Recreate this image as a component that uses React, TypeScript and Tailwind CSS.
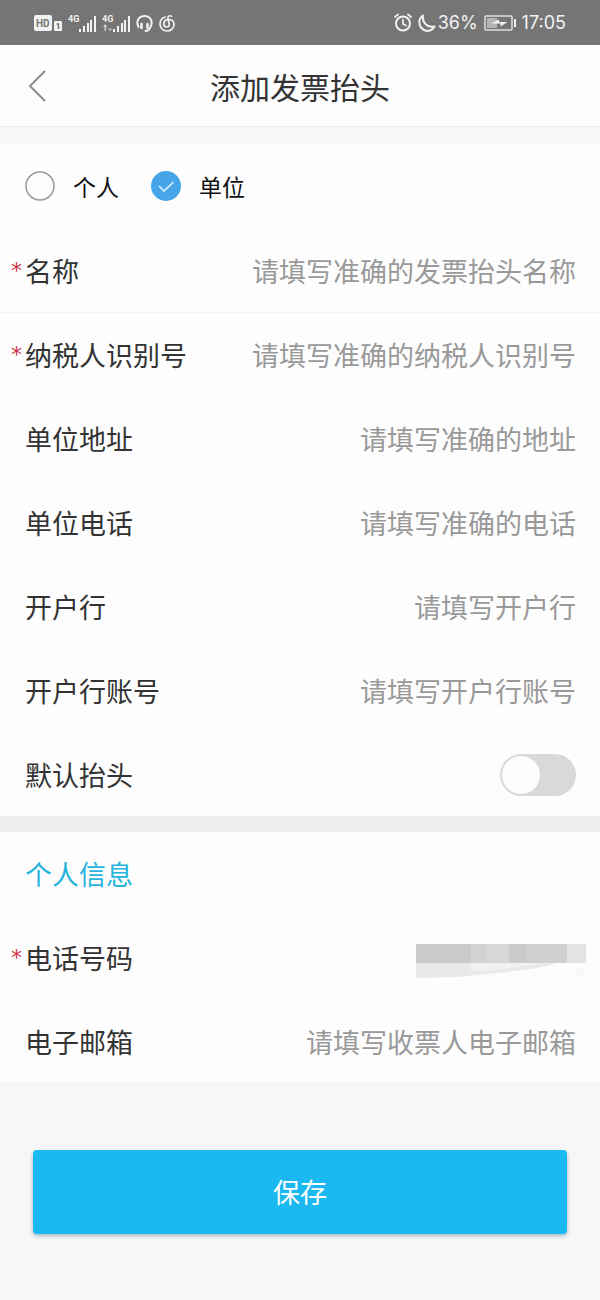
import React, { useState } from 'react';

interface Field {
    id: string;
    label: string;
    placeholder: string;
    required?: boolean;
    line?: string;
}

const companyFields: Field[] = [
    { id: 'name', label: '名称', placeholder: '请填写准确的发票抬头名称', required: true, line: 'border-[#f5f5f5]' },
    { id: 'taxNo', label: '纳税人识别号', placeholder: '请填写准确的纳税人识别号', required: true },
    { id: 'address', label: '单位地址', placeholder: '请填写准确的地址' },
    { id: 'tel', label: '单位电话', placeholder: '请填写准确的电话' },
    { id: 'bank', label: '开户行', placeholder: '请填写开户行' },
    { id: 'bankNo', label: '开户行账号', placeholder: '请填写开户行账号' },
];

function SignalIcon({ data }: { data?: boolean }) {
    return (
        <svg className="w-7 h-5" viewBox="0 0 28 20" fill="#f2f2f2" aria-hidden="true">
            <text x="0" y="9" fontSize="9" fontWeight="700" fontFamily="Roboto, sans-serif">4G</text>
            {data && <path d="M3 11l2.500 3H4v4H2.500v-4H1zM8 18l-2-2.500h4z" opacity="0.7" />}
            <rect x="11" y="16" width="2" height="3" />
            <rect x="15" y="13" width="2" height="6" />
            <rect x="19" y="10" width="2" height="9" />
            <rect x="22" y="7" width="2" height="12" />
            <rect x="26" y="3" width="2" height="16" />
        </svg>
    );
}

function StatusBar() {
    return (
        <div className="h-[45px] bg-[#757575] text-[#f2f2f2] flex items-center justify-between px-[34px]">
            <div className="flex items-center gap-1.5">
                <svg className="w-7 h-5" viewBox="0 0 28 20" fill="#f2f2f2" aria-hidden="true">
                    <rect x="0" y="2" width="18" height="16" rx="2" />
                    <text x="2" y="14" fontSize="10" fontWeight="700" fill="#757575" fontFamily="Roboto, sans-serif">HD</text>
                    <rect x="20" y="8" width="8" height="10" rx="1" />
                    <path d="M22.500 11h2v5" fill="none" stroke="#757575" strokeWidth="1.500" />
                </svg>
                <SignalIcon />
                <SignalIcon data />
                <svg className="w-[17px] h-5" viewBox="0 0 17 20" fill="none" stroke="#f2f2f2" strokeWidth="2" strokeLinecap="round" aria-hidden="true">
                    <path d="M2.500 14C-.5 8 3 3 8.500 3s9 5 6 11c-.8 2.500-2.500 4-5 4" />
                    <path d="M5.500 11v4M11.500 11v4" strokeWidth="2.500" />
                </svg>
                <svg className="w-4 h-5" viewBox="0 0 16 20" fill="none" stroke="#f2f2f2" strokeWidth="1.700" strokeLinecap="round" aria-hidden="true">
                    <path d="M6 4C3 5 1 7.500 1 11c0 4 3 7 7 7s7-3 7-6.500C15 8 12.500 6.500 9.500 6.500S4.800 8.500 4.800 11c0 1.800 1.300 3 2.900 3s2.900-1.300 2.500-3L9 5.500C8.600 3.500 10 2 12.500 3.200" />
                </svg>
            </div>
            <div className="flex items-center font-['Inter',sans-serif] text-[18px] leading-5">
                <svg className="w-[18px] h-5" viewBox="0 0 18 20" fill="none" stroke="#f2f2f2" strokeWidth="2" strokeLinecap="round" aria-hidden="true">
                    <circle cx="9" cy="10.500" r="7" />
                    <path d="M9 6.500v4.500l3 1.500M1 4l3-2.500M17 4l-3-2.500" strokeWidth="1.700" />
                </svg>
                <svg className="w-[18px] h-5 ml-1.5" viewBox="0 0 18 20" fill="none" stroke="#f2f2f2" strokeWidth="2" strokeLinejoin="round" aria-hidden="true">
                    <path d="M5 2.500C-.5 6 .5 14 6 17c4 2 8.500.5 10.500-3.500C10 15 4 10.500 5 2.500z" />
                </svg>
                <span className="ml-0.5">36%</span>
                <svg className="w-8 h-5 ml-1.5" viewBox="0 0 32 20" aria-hidden="true">
                    <rect x="1" y="3" width="27" height="14" rx="1" fill="none" stroke="#dedede" strokeWidth="1.500" />
                    <rect x="3" y="5" width="10" height="10" fill="#b5b5b5" />
                    <path d="M7 10.500l8-4v2.500h8.500l-7 4.500v-3z" fill="#f2f2f2" />
                    <rect x="30" y="6" width="2" height="8" fill="#f2f2f2" />
                </svg>
                <span className="ml-1.5">17:05</span>
            </div>
        </div>
    );
}

function RequiredMark() {
    return <span className="font-['DejaVu_Sans',sans-serif] text-[22px] text-[#cf3347]">*</span>;
}

function Label({ id, text, required }: { id: string; text: string; required?: boolean }) {
    return (
        <label htmlFor={id} className="flex shrink-0 items-center text-[#333]">
            <span className="w-[14px] flex">{required && <RequiredMark />}</span>
            {text}
        </label>
    );
}

function FieldRow({ field }: { field: Field }) {
    return (
        <div className={`h-[84px] flex items-center pl-[11px] pr-6 border-b ${field.line ?? 'border-transparent'}`}>
            <Label id={field.id} text={field.label} required={field.required} />
            <input
                id={field.id}
                placeholder={field.placeholder}
                className="flex-1 min-w-0 h-12 text-right text-[#333] placeholder:text-[#999] bg-transparent outline-none"
            />
        </div>
    );
}

function TypeRadio({ label, checked, onSelect }: { label: string; checked: boolean; onSelect: () => void }) {
    return (
        <label className="flex items-center text-[23px] leading-8 text-[#111]">
            <input type="radio" name="titleType" checked={checked} onChange={onSelect} className="sr-only" />
            <svg className="w-[30px] h-[30px] mr-[18px]" viewBox="0 0 30 30" fill="none" aria-hidden="true">
                {checked ? (
                    <>
                        <circle cx="15" cy="15" r="15" fill="#46a5e9" />
                        <path d="M8 15l5 5 9.500-9" stroke="#d9efff" strokeWidth="1.700" />
                    </>
                ) : (
                    <circle cx="15" cy="15" r="14" stroke="#9b9b9b" strokeWidth="1.500" />
                )}
            </svg>
            {label}
        </label>
    );
}

// Blurred out phone number
function MaskedPhone() {
    return (
        <svg className="w-[172px] h-10" viewBox="0 0 172 40" role="img" aria-label="电话号码">
            <path d="M2 24h139v2l-18 4-30 4-20 2-30 3-41 1z" fill="#e9e9e9" />
            <path d="M57 24h72l-18 4-38 5H57z" fill="#f1f1f1" />
            <rect x="2" y="6" width="55" height="19" fill="#cacaca" />
            <rect x="57" y="6" width="16" height="19" fill="#d3d3d3" />
            <rect x="73" y="6" width="22" height="19" fill="#d8d8d8" />
            <rect x="95" y="6" width="18" height="19" fill="#cacaca" />
            <rect x="113" y="6" width="40" height="19" fill="#d0d0d0" />
            <rect x="153" y="6" width="19" height="19" fill="#e3e3e3" />
            <rect x="162" y="30" width="8" height="9" fill="#f8f8f8" />
        </svg>
    );
}

export default function App() {
    const [type, setType] = useState<'person' | 'company'>('company');
    const [isDefault, setIsDefault] = useState(false);

    return (
        <div className="min-h-screen bg-[#f7f7f7] font-['Noto_Sans_CJK_SC',sans-serif] text-[27px] leading-10">
            <StatusBar />

            {/* Header */}
            <header className="h-[82px] bg-[#fdfdfd] border-b border-[#ececec] grid grid-cols-[80px_1fr_80px] items-center">
                <button aria-label="返回" className="h-full pl-7">
                    <svg className="w-5 h-8" viewBox="0 0 20 32" fill="none" stroke="#8c8c8c" strokeWidth="2" aria-hidden="true">
                        <path d="M17 1L2 16l15 15" />
                    </svg>
                </button>
                <h1 className="text-center text-[30px] text-[#333]">添加发票抬头</h1>
            </header>

            <main>
                <section className="mt-[17px] bg-[#fdfdfd]">
                    <div className="h-[85px] flex items-center gap-8 px-[25px] pb-0.5">
                        <TypeRadio label="个人" checked={type === 'person'} onSelect={() => setType('person')} />
                        <TypeRadio label="单位" checked={type === 'company'} onSelect={() => setType('company')} />
                    </div>
                    {companyFields.map((field) => (
                        <FieldRow key={field.id} field={field} />
                    ))}
                    <div className="h-[83px] flex items-center justify-between pl-[11px] pr-6">
                        <Label id="isDefault" text="默认抬头" />
                        <input
                            id="isDefault"
                            type="checkbox"
                            role="switch"
                            checked={isDefault}
                            onChange={(e) => setIsDefault(e.target.checked)}
                            className="appearance-none w-[76px] h-[42px] rounded-full bg-[#d9d9d9] p-0.5 flex before:block before:w-[38px] before:h-[38px] before:rounded-full before:bg-[#fdfdfd] checked:bg-[#1ab9f1] checked:justify-end"
                        />
                    </div>
                </section>

                <div className="h-4 bg-[#ededed]" />

                {/* Personal info */}
                <section className="bg-[#fdfdfd]">
                    <h2 className="h-[84px] flex items-center px-[25px] text-[#27b4dc]">个人信息</h2>
                    <div className="h-[84px] flex items-center justify-between pl-[11px] pr-[14px]">
                        <span className="flex items-center text-[#333]">
                            <span className="w-[14px] flex">
                                <RequiredMark />
                            </span>
                            电话号码
                        </span>
                        <MaskedPhone />
                    </div>
                    <FieldRow field={{ id: 'email', label: '电子邮箱', placeholder: '请填写收票人电子邮箱', line: 'border-[#f3f3f3]' }} />
                </section>

                <div className="px-[33px] pt-[66px] pb-16">
                    <button className="w-full h-[84px] rounded-[4px] bg-[#1ab9f1] text-white shadow-[0_2px_4px_rgba(0,60,110,0.35)]">
                        保存
                    </button>
                </div>
            </main>
        </div>
    );
}
